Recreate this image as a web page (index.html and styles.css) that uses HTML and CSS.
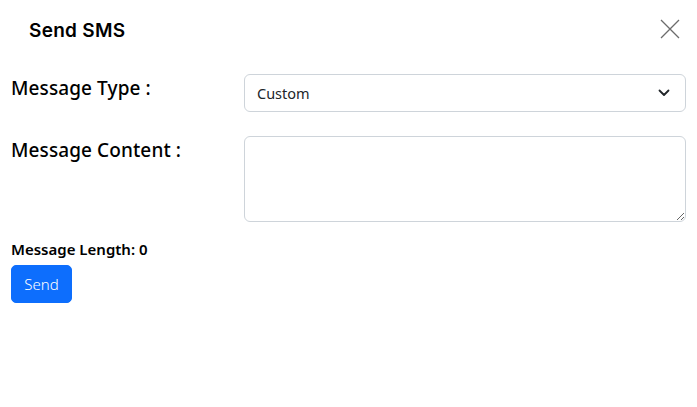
FILE: index.html
```html
<!DOCTYPE html>
<html>
<head>
<meta charset="utf-8">
<link rel="stylesheet" href="styles.css">
</head>
<body>
<div class="modal">
  <div class="modal-header">
    <h5 class="title">Send SMS</h5>
    <button class="close" aria-label="Close">
      <svg width="20" height="20" viewBox="0 0 20 20"><path d="M1 1L19 19M19 1L1 19" stroke="#6c6c6c" stroke-width="1.3" fill="none"/></svg>
    </button>
  </div>
  <div class="modal-body">
    <div class="row">
      <label class="label">Message Type :</label>
      <div class="select">
        <span>Custom</span>
        <svg width="12" height="8" viewBox="0 0 12 8"><path d="M1.5 1.5L6 6L10.5 1.5" stroke="#212529" stroke-width="1.8" fill="none" stroke-linecap="round" stroke-linejoin="round"/></svg>
      </div>
    </div>
    <div class="row row2">
      <label class="label">Message Content :</label>
      <textarea class="textarea"></textarea>
    </div>
    <div class="length">Message Length: 0</div>
    <button class="send">Send</button>
  </div>
</div>
</body>
</html>
```
FILE: styles.css
```css
* { box-sizing: border-box; }
body {
  margin: 0;
  background: #fff;
  font-family: "Noto Sans", "Open Sans", sans-serif;
  color: #000;
}
.modal { width: 697px; }
.modal-header {
  display: flex;
  justify-content: space-between;
  align-items: flex-start;
  padding: 18px 17px 0 29px;
  height: 62px;
}
.title {
  margin: 0;
  margin-top: 1px;
  font-family: Inter, "Liberation Sans", sans-serif;
  font-weight: 600;
  font-size: 19px;
  line-height: 24px;
  letter-spacing: 0.3px;
}
.close {
  border: 0;
  background: none;
  padding: 0;
  width: 20px;
  height: 20px;
  margin-top: 1px;
}
.close svg { display: block; }
.modal-body { padding: 12px 11px 0 11px; }
.row { display: flex; align-items: flex-start; }
.row2 { margin-top: 24px; }
.label {
  width: 233px;
  font-size: 19px;
  line-height: 24px;
  padding-top: 2px;
  font-weight: 500;
  letter-spacing: 0.1px;
}
.select {
  flex: 1;
  height: 38px;
  border: 1px solid #ced4da;
  border-radius: 6px;
  display: flex;
  align-items: center;
  justify-content: space-between;
  padding: 0 15px 0 12px;
  font-size: 14.5px;
  color: #212529;
}
.textarea {
  flex: 1;
  height: 86px;
  border: 1px solid #ced4da;
  border-radius: 6px;
  resize: vertical;
  font: inherit;
}
.length {
  margin-top: 17px;
  font-size: 15px;
  font-weight: 600;
  line-height: 20px;
}
.send {
  margin-top: 6px;
  width: 61px;
  height: 38px;
  border: 1px solid #0d6efd;
  background: #0d6efd;
  color: #fff;
  border-radius: 5px;
  font-family: "Noto Sans", sans-serif;
  font-size: 15px;
  font-weight: 300;
}
```
